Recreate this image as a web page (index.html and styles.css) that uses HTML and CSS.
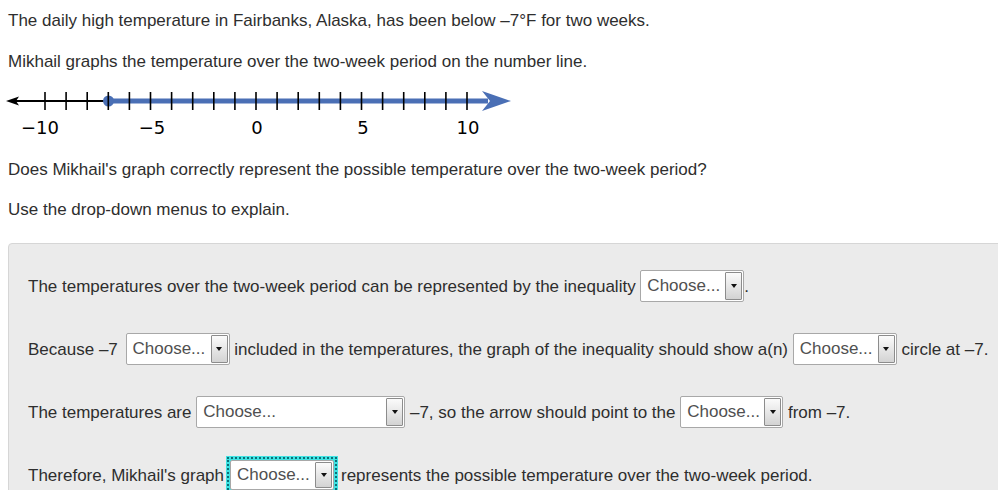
FILE: index.html
```
<!DOCTYPE html>
<html>
<head>
<meta charset="utf-8">
<link rel="stylesheet" href="styles.css">
</head>
<body>
<div class="page">
  <p class="intro">The daily high temperature in Fairbanks, Alaska, has been below –7°F for two weeks.</p>
  <p class="stem">Mikhail graphs the temperature over the two-week period on the number line.</p>
  <svg class="numberline" width="520" height="52" viewBox="0 0 520 52">
    <line x1="12" y1="13" x2="110" y2="13" stroke="#000" stroke-width="2"/>
    <polygon points="6,13 19,8.5 16,13 19,17.5" fill="#000"/>
    <line x1="108" y1="13" x2="488" y2="13" stroke="#4a6fb5" stroke-width="5"/>
    <circle cx="108.5" cy="13" r="5.5" fill="#4a6fb5"/>
    <polygon points="511,13 482,3 490,13 482,23" fill="#4a6fb5"/>
    <g stroke="#000" stroke-width="1.6">
      <line x1="45" y1="4" x2="45" y2="22"/>
      <line x1="66.1" y1="4" x2="66.1" y2="22"/>
      <line x1="87.2" y1="4" x2="87.2" y2="22"/>
      <line x1="108.3" y1="4" x2="108.3" y2="22"/>
      <line x1="129.4" y1="4" x2="129.4" y2="22"/>
      <line x1="150.5" y1="4" x2="150.5" y2="22"/>
      <line x1="171.6" y1="4" x2="171.6" y2="22"/>
      <line x1="192.7" y1="4" x2="192.7" y2="22"/>
      <line x1="213.8" y1="4" x2="213.8" y2="22"/>
      <line x1="234.9" y1="4" x2="234.9" y2="22"/>
      <line x1="256" y1="4" x2="256" y2="22"/>
      <line x1="277.1" y1="4" x2="277.1" y2="22"/>
      <line x1="298.2" y1="4" x2="298.2" y2="22"/>
      <line x1="319.3" y1="4" x2="319.3" y2="22"/>
      <line x1="340.4" y1="4" x2="340.4" y2="22"/>
      <line x1="361.5" y1="4" x2="361.5" y2="22"/>
      <line x1="382.6" y1="4" x2="382.6" y2="22"/>
      <line x1="403.7" y1="4" x2="403.7" y2="22"/>
      <line x1="424.8" y1="4" x2="424.8" y2="22"/>
      <line x1="445.9" y1="4" x2="445.9" y2="22"/>
      <line x1="467" y1="4" x2="467" y2="22"/>
    </g>
    <g class="nl-labels" text-anchor="middle">
      <text x="40" y="46">−10</text>
      <text x="152" y="46">−5</text>
      <text x="257" y="46">0</text>
      <text x="363" y="46">5</text>
      <text x="468" y="46">10</text>
    </g>
  </svg>
  <p class="question">Does Mikhail's graph correctly represent the possible temperature over the two-week period?</p>
  <p class="instr">Use the drop-down menus to explain.</p>

  <div class="answer-box">
    <div class="row">The temperatures over the two-week period can be represented by the inequality <span class="dd"><span class="dd-text">Choose...</span><span class="dd-btn"><span class="caret"></span></span></span>.</div>
    <div class="row">Because –7 <span class="dd spaced"><span class="dd-text">Choose...</span><span class="dd-btn"><span class="caret"></span></span></span> included in the temperatures, the graph of the inequality should show a(n) <span class="dd"><span class="dd-text">Choose...</span><span class="dd-btn"><span class="caret"></span></span></span> circle at –7.</div>
    <div class="row">The temperatures are <span class="dd wide"><span class="dd-text">Choose...</span><span class="dd-btn"><span class="caret"></span></span></span> –7, so the arrow should point to the <span class="dd narrow"><span class="dd-text">Choose...</span><span class="dd-btn"><span class="caret"></span></span></span> from –7.</div>
    <div class="row">Therefore, Mikhail's graph<span class="focus-ring"><span class="dd"><span class="dd-text">Choose...</span><span class="dd-btn"><span class="caret"></span></span></span></span>represents the possible temperature over the two-week period.</div>
  </div>
</div>
</body>
</html>
```
FILE: styles.css
```
html, body {
  margin: 0;
  padding: 0;
  overflow: hidden;
  background: #fff;
}

.page {
  padding: 0 0 0 8px;
  font-family: "Liberation Sans", Arial, sans-serif;
  font-size: 17px;
  color: #2e2e2e;
}

.page p {
  margin: 0;
  line-height: 20px;
  white-space: nowrap;
}

.intro { padding-top: 11px; }
.stem { margin-top: 21px !important; }

.numberline {
  display: block;
  margin-top: 16px;
  margin-left: -8px;
}

.nl-labels {
  font-family: "DejaVu Sans", Verdana, sans-serif;
  font-size: 18px;
  fill: #000;
}

.question { margin-top: 20px !important; }
.instr { margin-top: 20px !important; }

.answer-box {
  margin-top: 23px;
  margin-right: -20px;
  background: #ebebeb;
  border: 1px solid #d6d6d6;
  border-radius: 4px;
  padding: 27px 0 40px 19px;
  display: flex;
  flex-direction: column;
  gap: 31px;
}

.row {
  height: 32px;
  line-height: 32px;
  white-space: nowrap;
}

.dd {
  display: inline-flex;
  vertical-align: middle;
  box-sizing: border-box;
  width: 104px;
  height: 32px;
  margin-top: -3px;
  background: #fff;
  border: 1px solid #a8a8a8;
  border-radius: 2px;
  line-height: 29px;
  color: #505050;
}

.dd.spaced { margin-left: 3px; }
.dd.wide { width: 209px; }
.dd.narrow { width: 103px; }

.dd-text {
  flex: 1;
  padding-left: 6px;
  overflow: hidden;
}

.dd-btn {
  width: 15px;
  margin: 1px 1px 1px 0;
  border: 1px solid #8c8c8c;
  border-radius: 1px;
  background: linear-gradient(#fbfbfb, #d3d3d3);
  display: flex;
  align-items: center;
  justify-content: center;
}

.caret {
  width: 0;
  height: 0;
  border-left: 3px solid transparent;
  border-right: 3px solid transparent;
  border-top: 4px solid #111;
}

.focus-ring {
  display: inline-block;
  vertical-align: middle;
  margin: -3px 4px 0 3px;
  padding: 1px;
  background: #3fe3e3;
  border: 2px dotted #0b6f78;
  line-height: 0;
  box-shadow: 0 0 0 1px #3fe3e3;
}

.focus-ring .dd {
  margin-top: 0;
  width: 104px;
  height: 30px;
  line-height: 27px;
}
```
